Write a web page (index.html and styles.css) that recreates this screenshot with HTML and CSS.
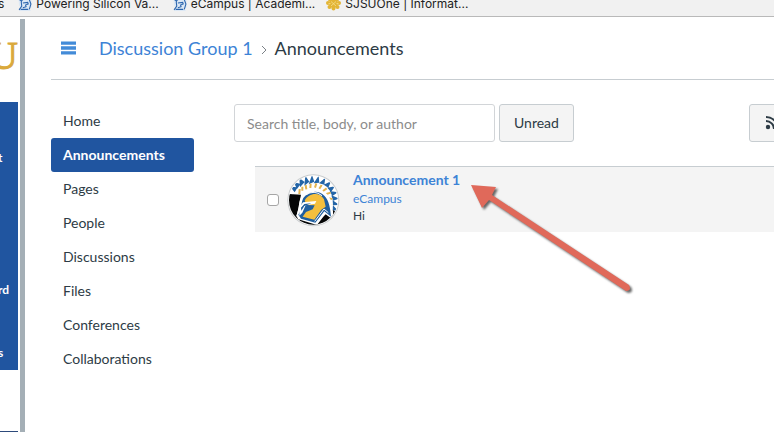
FILE: index.html
```html
<!DOCTYPE html>
<html lang="en">
<head>
<meta charset="utf-8">
<title>Announcements</title>
<link rel="stylesheet" href="styles.css">
</head>
<body>
<svg class="defs" aria-hidden="true">
  <symbol id="helmet" viewBox="0 0 26 26">
    <path d="M1 5 6 7 5 0h20v20l-5 1 4 5H2l4-7-4-3Z" fill="#dce8f5"/>
    <path d="M2 24 7 17 6 9c2-6 10-8 15-4l3 8-3 10M5 23h14M9 11l9-1 1 3-5 2 1 3-6 2M3 5l3 2M7 1l2 3M15 0v3" fill="none" stroke="#2d66ae" stroke-width="2"/>
  </symbol>
</svg>
<nav class="bookmarks" aria-label="Bookmarks">
  <a class="bookmark bookmark-cut" href="#">s</a>
  <a class="bookmark" href="#"><svg class="favicon"><use href="#helmet"/></svg>Powering Silicon Va...</a>
  <a class="bookmark" href="#"><svg class="favicon"><use href="#helmet"/></svg>eCampus | Academi...</a>
  <a class="bookmark" href="#"><svg class="favicon favicon-wide" viewBox="0 0 30 26"><g fill="#e3b535"><circle cx="15" cy="12" r="9"/><circle cx="4" cy="11" r="4"/><circle cx="26" cy="11" r="4"/><circle cx="7" cy="19" r="4"/><circle cx="23" cy="19" r="4"/><circle cx="15" cy="22" r="4"/><circle cx="8" cy="4" r="4"/><circle cx="22" cy="4" r="4"/></g><path d="m10 8 10 9m0-9-10 9M5 12h4m12 0h4" stroke="#f6df8e" stroke-width="1.5"/></svg>SJSUOne | Informat...</a>
</nav>
<div class="app">
  <aside class="rail">
    <div class="brand">U</div>
    <nav class="rail-menu" aria-label="Global">
      <a href="#">t</a>
      <a class="rail-low" href="#">rd</a>
      <a href="#">s</a>
    </nav>
    <div class="rail-foot"></div>
  </aside>
  <div class="page">
    <header class="crumbs">
      <button class="menu" type="button" aria-label="Menu"><svg viewBox="0 0 15 14" width="15" height="14"><path d="M0 .4h15v3.4H0zM0 5.3h15v3.4H0zM0 10.2h15v3.4H0z" fill="#438bd8"/></svg></button>
      <a href="#">Discussion Group 1</a>
      <svg class="chevron" viewBox="0 0 6 10"><path d="m1 1 4 4-4 4" fill="none" stroke="#7b8187"/></svg>
      <span>Announcements</span>
    </header>
    <div class="columns">
      <nav class="sections" aria-label="Group">
        <a href="#">Home</a>
        <a class="active" href="#">Announcements</a>
        <a href="#">Pages</a>
        <a href="#">People</a>
        <a href="#">Discussions</a>
        <a href="#">Files</a>
        <a href="#">Conferences</a>
        <a href="#">Collaborations</a>
      </nav>
      <main class="content">
        <div class="toolbar">
          <input class="search" type="text" placeholder="Search title, body, or author" aria-label="Search title, body, or author">
          <button class="button" type="button">Unread</button>
          <button class="button feed" type="button" aria-label="Feed"><svg viewBox="0 0 16 16" width="16" height="16"><circle cx="3" cy="12" r="2.2" fill="#2d3b45"/><path d="M1 6a8 8 0 0 1 8 8M1 2a12 12 0 0 1 12 12" fill="none" stroke="#2d3b45" stroke-width="2"/></svg></button>
        </div>
        <article class="announcement">
          <input class="pick" type="checkbox" aria-label="Select Announcement 1">
          <svg class="avatar" viewBox="0 0 159 159">
            <defs><clipPath id="disc"><circle cx="79" cy="79" r="73"/></clipPath></defs>
            <circle cx="79" cy="79" r="78" fill="#c9ccce"/>
            <circle cx="79" cy="79" r="75" fill="#fff"/>
            <g clip-path="url(#disc)">
              <path d="M0 60 42 62 36 96 28 126 64 118 60 159H0ZM52 126 84 150 134 104 159 124V159H48Z" fill="#050607"/>
              <path d="m10 38 22 2-9 15ZM20 24l21 6-11 15ZM37 12l16 12-14 16ZM55 5l12 18-15 12ZM75 3l7 20-17 8ZM95 5l2 21-17 2ZM115 11l-3 21-16-4ZM132 22l-8 19-14-9ZM144 37l-12 17-11-13ZM153 55l-17 11-8-15ZM157 74l-19 6-5-16ZM158 93l-20 1-1-15ZM155 112l-19-4 2-14Z" fill="#2465a7"/>
              <path d="m37 60 1-15m8 5 0-12m12 8-2-13m14 9 1-13m13 12 4-13m9 16 7-11m4 18 11-8m-1 17 13-4m-8 17 13 2m-12 14 11 5" fill="none" stroke="#e3b34e" stroke-width="6"/>
              <path d="M28 126C38 103 33 87 42 70 58 43 97 38 120 61c16 17 18 45 20 78l-25-19-25 33-56-17Z" fill="#fff"/>
              <path d="M34 122c12-20 7-35 15-50 16-22 46-25 63-7 15 15 18 39 20 63l-20-16-27 34-43-12Z" fill="#205f9f"/>
              <path d="M53 80C64 57 98 52 111 76l5 22-13 9-21 30-35-9 10-14 20-8 6-12-22-1Z" fill="#f4bf3d"/>
              <path d="M37 101 48 85l40-4-4 8-28 5-10 22-9 9Z" fill="#fff"/>
              <path d="M42 101 52 90l21-2-21 8-9 14Z" fill="#205f9f"/>
              <path d="M56 63q26-17 49 2M124 116l-13-11-28 37" fill="none" stroke="#fff" stroke-width="3"/>
            </g>
          </svg>
          <div class="summary">
            <a class="title" href="#">Announcement 1</a>
            <a class="author" href="#">eCampus</a>
            <p>Hi</p>
          </div>
          <svg class="pointer" viewBox="0 0 170 110" aria-hidden="true"><path d="M1 1 26 3 22 11 159 101Q162 107 156 107L19 16 12 24Z" fill="#e0695a"/></svg>
        </article>
      </main>
    </div>
  </div>
</div>
</body>
</html>
```
FILE: styles.css
```css
* { box-sizing: border-box; }
body {
  margin: 0;
  min-height: 100vh;
  display: flex;
  flex-direction: column;
  overflow: hidden;
  background: #fff;
  color: #2d3b45;
  font: 14px/20px Lato, "Liberation Sans", sans-serif;
}
a { color: inherit; text-decoration: none; }
button { font: inherit; color: inherit; }
.defs { display: none; }
.bookmarks {
  height: 17px;
  display: flex;
  align-items: flex-end;
  gap: 14px;
  padding-bottom: 5px;
  overflow: hidden;
  white-space: nowrap;
  background: #f1f1f1;
  border-bottom: 1px solid #b9b9b9;
  color: #222;
  font: 12px/14px Inter, Roboto, sans-serif;
}
.bookmark { display: flex; align-items: center; gap: 4px; }
.bookmark-cut { margin-left: -2px; }
.favicon { width: 14px; height: 14px; }
.favicon-wide { width: 15px; margin-left: -3px; }
.app { flex: 1; display: flex; }
.rail {
  width: 25px;
  flex: none;
  display: flex;
  flex-direction: column;
  margin-top: 2px;
  padding-right: 2px;
  border-right: 5px solid #a4afb6;
}
.brand {
  height: 83px;
  padding-top: 15px;
  display: flex;
  justify-content: flex-end;
  overflow: hidden;
  color: #daa93c;
  font: 40px/44px "Liberation Serif", serif;
  -webkit-text-stroke: 1px #daa93c;
}
.rail-menu {
  height: 268px;
  display: flex;
  flex-direction: column;
  align-items: flex-start;
  gap: 43px;
  padding-top: 46px;
  overflow: hidden;
  background: #2055a0;
  color: #fff;
  font-size: 12px;
  font-weight: 700;
}
.rail-menu a { margin-left: -2px; }
.rail-menu .rail-low { margin-top: 69px; }
.rail-foot { margin-top: auto; height: 1px; background: #2d4a7b; }
.page { flex: 1; min-width: 0; padding-left: 26px; }
.crumbs {
  height: 63px;
  display: flex;
  align-items: center;
  padding-left: 10px;
  border-bottom: 1px solid #c7cdd1;
  font-size: 18px;
  line-height: 24px;
}
.crumbs a { color: #3d83d6; }
.menu {
  display: flex;
  margin-right: 23px;
  padding: 0;
  border: 0;
  background: none;
}
.chevron { width: 6px; height: 10px; margin: 4px 8px 0; }
.columns { display: flex; gap: 40px; padding-top: 24px; }
.sections { width: 143px; flex: none; }
.sections a {
  display: block;
  padding: 7px 12px;
  border-radius: 3px;
}
.sections .active { background: #2055a0; color: #fff; font-weight: 700; }
.content { flex: 1; min-width: 0; }
.toolbar { display: flex; gap: 4px; }
.search {
  width: 261px;
  height: 38px;
  padding: 0 12px;
  border: 1px solid #d2d5d8;
  border-radius: 3px;
  font: inherit;
}
.search::placeholder { color: #8c8c8c; opacity: 1; }
.button {
  height: 38px;
  padding: 0 14px;
  background: #f4f4f4;
  border: 1px solid #c7cdd1;
  border-radius: 3px;
}
.feed { flex: none; margin-left: auto; margin-right: -23px; padding: 0 15px; }
.feed svg { display: block; }
.announcement {
  position: relative;
  display: flex;
  align-items: center;
  height: 66px;
  margin: 24px 0 0 21px;
  padding-left: 12px;
  background: #f4f4f4;
  border-top: 1px solid #c7cdd1;
}
.pick {
  appearance: none;
  width: 12px;
  height: 12px;
  margin: 0;
  background: #fff;
  border: 1px solid #a6a6a6;
  border-radius: 3px;
}
.pick:checked { background: #3d83d6; }
.avatar { width: 53px; height: 53px; margin: 2px 13px 0 8px; }
.summary { align-self: flex-start; padding-top: 3px; font-size: 12px; line-height: 18px; }
.summary a { display: block; color: #3d83d6; }
.summary .title { font-size: 14px; line-height: 20px; font-weight: 700; }
.summary p { margin: 0; line-height: 16px; }
.pointer {
  position: absolute;
  left: 215px;
  top: 17px;
  width: 170px;
  height: 110px;
  overflow: visible;
  filter: drop-shadow(2px 2px 1px #666);
}
```
